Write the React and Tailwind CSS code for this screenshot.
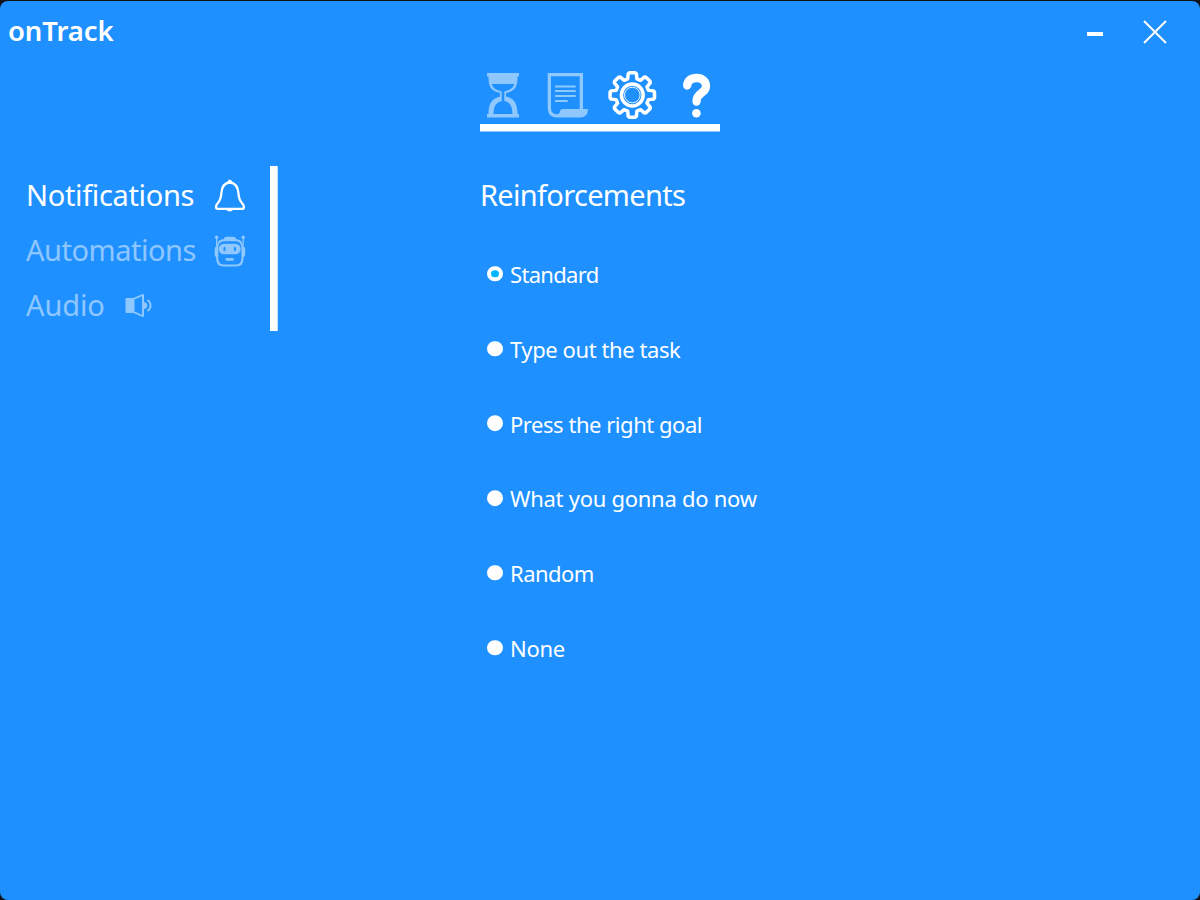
import React from 'react';

const gearPoints = Array.from({ length: 8 }, (_, i) => {
  const at = (deg, r) => {
    const a = ((i * 45 + deg - 90) * Math.PI) / 180;
    return `${(632.3 + r * Math.cos(a)).toFixed(2)},${(95 + r * Math.sin(a)).toFixed(2)}`;
  };
  return [at(-16, 16.8), at(-11, 21.6), at(-7.5, 22.4), at(7.5, 22.4), at(11, 21.6), at(16, 16.8)].join(' ');
}).join(' ');

function Hourglass() {
  return (
    <svg className="h-[58px] w-[60px] opacity-50" viewBox="480 66 60 58" fill="white">
      <path d="M487 73h32v3.4h-1.500C517.500 86 516 90.500 506 93V96.500C514.500 98.500 517.500 104 517.500 114H519v3.500H487V114h1.500C488.500 104 491.500 98.500 500 96.500V93C490 90.500 488.500 86 488.500 76.400H487ZM491.800 84C493 88.500 496.500 90 501.700 91.500V101C496 102.500 493.700 106 493.500 114H512.500C512.300 106 510 102.500 504.300 101V91.500C509.500 90 513 88.500 514.200 84Z" fillRule="evenodd" />
    </svg>
  );
}

function Scroll() {
  return (
    <svg className="h-[58px] w-[64px] opacity-50" viewBox="540 66 64 58" fill="none" stroke="white">
      <path d="M547.700 73H583V109H588Q588 117.500 580 117.500H556.500Q547.700 117 547.700 108ZM551 76.300V108Q551 113.800 556.500 114.300H558Q559.700 114 560 111Q560.300 109 562.500 109H579.700V76.300Z" fill="white" fillRule="evenodd" stroke="none" />
      <path d="M555 86.500h20.700M555 91h20.700M555 96h20.700M555 101h12.700" strokeWidth="1.800" />
    </svg>
  );
}

function Gear() {
  return (
    <svg className="h-[58px] w-[56px]" viewBox="604 66 56 58" fill="none" stroke="white">
      <polygon points={gearPoints} strokeWidth="3.500" strokeLinejoin="round" />
      <circle cx="632.300" cy="95" r="10.900" strokeWidth="3.500" />
      <circle cx="632.300" cy="95" r="7.800" strokeWidth="0.900" />
    </svg>
  );
}

function Question() {
  return (
    <svg className="h-[58px] w-[60px]" viewBox="660 66 60 58" fill="none" stroke="white">
      <path d="M687.200 85.500C687.500 80.500 691 78 696.500 78C702.500 78 706 81.500 706 86C706 94 696.500 92 696.500 101.500" strokeWidth="8.300" strokeLinecap="round" />
      <circle cx="696.400" cy="113.300" r="4.300" fill="white" stroke="none" />
    </svg>
  );
}

function Bell() {
  return (
    <svg className="h-[36px] w-[36px] shrink-0" viewBox="212 178 36 36" fill="none" stroke="white">
      <path d="M229.800 182.500C223.500 183 221.700 187.500 221.300 193.500C221 199 219.800 201 217.500 203.500C215.300 206 215.500 208.800 218 208.800H242C244.500 208.800 244.500 206 242.300 203.500C240 201 238.800 199 238.500 193.500C238 187.500 236 183 229.800 182.500Z" strokeWidth="2.300" />
      <path d="M226.500 183Q229.800 176 233.200 183ZM225.500 209Q229.800 214 234 209Z" fill="white" stroke="none" />
    </svg>
  );
}

function Robot() {
  return (
    <svg className="h-[36px] w-[36px] shrink-0 opacity-50" viewBox="212 233 36 36" fill="white">
      <path d="M224.500 239H235.200Q242.500 239 242.700 246Q245.200 246.500 245.200 249V253.500Q245.200 257 243.500 257.500V259Q243.500 266.500 236 266.500H223.700Q216.200 266.500 216.200 259V257.500Q214.700 257 214.700 253.500V249Q214.700 246.500 217 246Q217.200 239 224.500 239ZM224 241.200Q218.300 241.500 218.300 247.500V258.500Q218.300 264.500 224.300 264.500H235.400Q241.400 264.500 241.400 258.500V247.500Q241.400 241.500 235.700 241.200Z" fillRule="evenodd" />
      <path d="M224 239Q224 236.800 227 236.800H233Q236 236.800 236 239ZM216 237h1.300v9H216ZM242.500 237h1.300v9H242.500Z" />
      <circle cx="216.600" cy="237.200" r="1.700" />
      <circle cx="243.200" cy="237.200" r="1.700" />
      <path d="M224 243.800H235.500A5 5 0 0 1 235.500 254.200H224A5 5 0 0 1 224 243.800ZM224.500 246.800C223 246.800 223 251.200 224.500 251.200C226 251.200 226 246.800 224.500 246.800ZM235 246.800C233.500 246.800 233.500 251.200 235 251.200C236.500 251.200 236.500 246.800 235 246.800Z" fillRule="evenodd" />
      <rect x="225.500" y="258" width="8.300" height="2.800" rx="1.200" />
    </svg>
  );
}

function Speaker() {
  return (
    <svg className="h-[36px] w-[36px] shrink-0 opacity-50" viewBox="121 288 36 36" fill="white">
      <path d="M126.500 298H133.500L142 294.200H144V316.800H142L133.500 313H126.500Q125.500 313 125.500 312V299Q125.500 298 126.500 298ZM134.500 299.600V311.400L142 314.800V296.200Z" fillRule="evenodd" />
      <path d="M144 302Q147.300 302.500 147.300 305.500T144 309Z" />
      <path d="M147.500 300Q150.600 302 150.600 305.500T147.500 311" fill="none" stroke="white" strokeWidth="1.900" />
    </svg>
  );
}

const options = [
  ['Standard', 'tracking-[-0.680px]'],
  ['Type out the task', 'tracking-[-0.420px]'],
  ['Press the right goal', 'tracking-[-0.460px]'],
  ['What you gonna do now', 'tracking-[-0.270px]'],
  ['Random', 'tracking-[-0.550px]'],
  ['None', 'tracking-[-0.300px]'],
];

export default function App() {
  return (
    <div className="h-[900px] w-[1200px] overflow-hidden bg-[#111318] pt-px font-['Noto_Sans','Open_Sans',sans-serif] text-white">
      <div className="flex h-[899px] flex-col rounded-lg bg-[#1e90ff]">
        <header className="flex h-[65px] items-start justify-between pl-2 pr-[33px]">
          <h1 className="text-[27.500px] leading-[60px] font-semibold tracking-[-0.100px]"><span>onTrack</span></h1>
          <div className="flex h-[62px] items-center gap-[40px]">
            <button aria-label="Minimize" className="h-[4px] w-4 translate-y-[2px] bg-white" />
            <button aria-label="Close">
              <svg className="size-6" viewBox="0 0 24 24" stroke="white" strokeWidth="2"><path d="M1 1L23 23M23 1L1 23" /></svg>
            </button>
          </div>
        </header>
        <nav className="ml-[480px] flex h-[65px] w-[240px] border-b-[7px] border-white shadow-[0_1px_0_rgba(255,255,255,0.5)]">
          <Hourglass /><Scroll /><Gear /><Question />
        </nav>
        <div className="mt-[35px] flex">
          <aside className="flex h-[165px] w-[277px] flex-col border-r-[7px] border-white pt-[2.500px] pl-[26px] text-[29px] shadow-[1px_0_0_rgba(255,255,255,0.7)]">
            <div className="flex h-[55px] shrink-0 items-center"><span className="w-[186px] pb-[2px] whitespace-nowrap tracking-[-0.340px]">Notifications</span><Bell /></div>
            <div className="flex h-[55px] shrink-0 items-center"><span className="w-[186px] pb-[2px] whitespace-nowrap tracking-[-0.470px] text-white/50">Automations</span><Robot /></div>
            <div className="flex h-[55px] shrink-0 items-center"><span className="w-[95px] pb-[2px] whitespace-nowrap tracking-[-0.100px] text-white/50">Audio</span><Speaker /></div>
          </aside>
          <main className="ml-[203px]">
            <h2 className="h-[71.100px] text-[29px] leading-[57px] tracking-[-0.680px]"><span>Reinforcements</span></h2>
            {options.map(([label, tracking], i) => (
              <label key={label} className="flex h-[74.800px] items-center pl-[7px]">
                <span className="mr-[7.500px] flex size-[15.500px] -translate-y-[0.800px] items-center justify-center rounded-full bg-white">
                  {i === 0 && <span className="size-[7.500px] rounded-full bg-[#00b7ff]" />}
                </span>
                <span className={`text-[22px] ${tracking}`}>{label}</span>
              </label>
            ))}
          </main>
        </div>
      </div>
    </div>
  );
}
